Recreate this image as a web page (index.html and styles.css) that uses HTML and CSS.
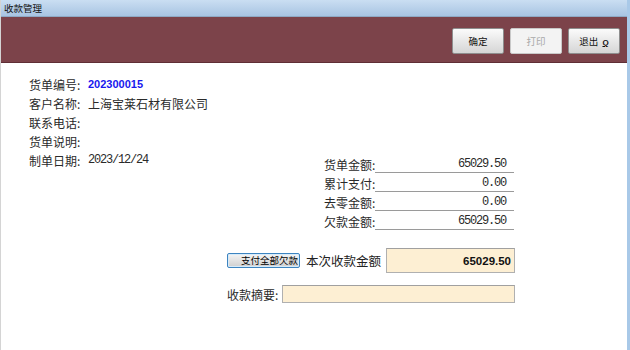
FILE: index.html
```html
<!DOCTYPE html>
<html lang="zh-CN">
<head>
  <meta charset="UTF-8">
  <title>收款管理</title>
  <link rel="stylesheet" href="styles.css">
</head>
<body>
  <div class="window">
    <div class="titlebar">收款管理</div>

    <div class="toolbar">
      <button class="tool-btn">确定</button>
      <button class="tool-btn" disabled>打印</button>
      <button class="tool-btn">退出 <u class="hotkey">Q</u></button>
    </div>

    <div class="content">
      <div class="info-row"><span class="info-label">货单编号:</span><span class="order-no">202300015</span></div>
      <div class="info-row"><span class="info-label">客户名称:</span><span>上海宝莱石材有限公司</span></div>
      <div class="info-row"><span class="info-label">联系电话:</span></div>
      <div class="info-row"><span class="info-label">货单说明:</span></div>

      <div class="split">
        <div class="info-row date-row"><span class="info-label">制单日期:</span><span class="mono">2023/12/24</span></div>

        <div class="amounts">
          <div class="amount-row"><span class="amount-label">货单金额:</span><span class="amount-value mono">65029.50</span></div>
          <div class="amount-row"><span class="amount-label">累计支付:</span><span class="amount-value mono">0.00</span></div>
          <div class="amount-row"><span class="amount-label">去零金额:</span><span class="amount-value mono">0.00</span></div>
          <div class="amount-row"><span class="amount-label">欠款金额:</span><span class="amount-value mono">65029.50</span></div>
        </div>
      </div>

      <div class="pay">
        <div class="pay-row">
          <button class="pay-all">支付全部欠款</button>
          <span class="pay-label">本次收款金额</span>
          <input type="text" class="field field-amount" value="65029.50" readonly>
        </div>
        <div class="pay-row memo-row">
          <span class="memo-label">收款摘要:</span>
          <input type="text" class="field field-memo" value="">
        </div>
      </div>
    </div>
  </div>
</body>
</html>
```

FILE: styles.css
```css
html, body { margin: 0; padding: 0; background: #fff; }
body {
  font-family: "Noto Sans CJK SC", "Liberation Sans", sans-serif;
  font-size: 12px;
  color: #2a2a2a;
}
.window {
  width: 630px;
  height: 350px;
  box-sizing: border-box;
  border-left: 1px solid #d4d4d4;
  border-right: 3px solid #a9c9e8;
  overflow: hidden;
}
.titlebar {
  height: 17px;
  line-height: 17px;
  padding-left: 3px;
  font-size: 9.5px;
  color: #111;
  background: linear-gradient(#cadef2, #a8c4e2);
  border-bottom: 1px solid #8fa9c4;
  box-sizing: border-box;
}
.toolbar {
  height: 46px;
  box-sizing: border-box;
  background: #7c434a;
  border-bottom: 1px solid #5f2e35;
  display: flex;
  justify-content: flex-end;
  gap: 6px;
  padding: 11px 7px 0 0;
}
.tool-btn {
  width: 52px;
  height: 26px;
  padding: 0;
  font-family: "Noto Sans CJK SC", sans-serif;
  font-size: 9.5px;
  color: #111;
  background: linear-gradient(#fbfbfb, #e6e6e6 55%, #d6d6d6);
  border: 1px solid #8e8e8e;
  border-radius: 2px;
}
.tool-btn:disabled { color: #a8a8a8; background: #f3f3f3; border-color: #c8c8c8; }
.hotkey { font-family: "Liberation Sans", sans-serif; font-size: 8px; font-weight: bold; margin-left: 2px; }

.content { padding: 12px 0 0 28px; }
.info-row { height: 19px; line-height: 19px; display: flex; white-space: nowrap; }
.info-label { width: 59px; flex: none; }
.order-no { font-family: "Liberation Sans", sans-serif; font-size: 11px; font-weight: bold; color: #1818ee; }
.mono { font-family: "Liberation Mono", monospace; font-size: 12px; letter-spacing: -1.2px; }

.split { display: flex; align-items: flex-start; }
.date-row { width: 295px; flex: none; }
.amounts { margin-top: 4px; }
.amount-row { display: flex; height: 19px; line-height: 19px; white-space: nowrap; }
.amount-label { width: 51px; flex: none; }
.amount-value {
  width: 139px;
  flex: none;
  box-sizing: border-box;
  text-align: right;
  padding-right: 8px;
  border-bottom: 1px solid #9a9a9a;
  height: 18px;
}

.pay { padding: 17px 0 0 198px; }
.pay-row { display: flex; align-items: center; white-space: nowrap; }
.pay-all {
  width: 73px;
  height: 15px;
  flex: none;
  padding: 0 1px 0 0;
  font-family: "Noto Sans CJK SC", sans-serif;
  font-size: 9.5px;
  line-height: 13px;
  color: #000;
  text-align: right;
  white-space: nowrap;
  overflow: hidden;
  background: linear-gradient(#f4f4f4, #e2e2e2 50%, #cfcfcf);
  border: 1px solid #3d84c0;
  border-radius: 2px;
  box-shadow: inset 0 0 0 1px #d6ebfa;
}
.pay-label { font-size: 12.5px; margin: 0 5px 0 6px; color: #222; }
.field {
  box-sizing: border-box;
  margin: 0;
  flex: none;
  border: 1px solid #b0b0b0;
  border-top-color: #a0a0a0;
  background: #fdefd3;
  font-family: "Liberation Sans", sans-serif;
  outline: none;
}
.field-amount {
  width: 129px;
  height: 25px;
  text-align: right;
  padding: 0 3px 0 0;
  font-size: 11.5px;
  font-weight: bold;
  color: #111;
}
.memo-row { margin-top: 12px; }
.memo-label { width: 55px; flex: none; }
.field-memo { width: 233px; height: 18px; }
```
